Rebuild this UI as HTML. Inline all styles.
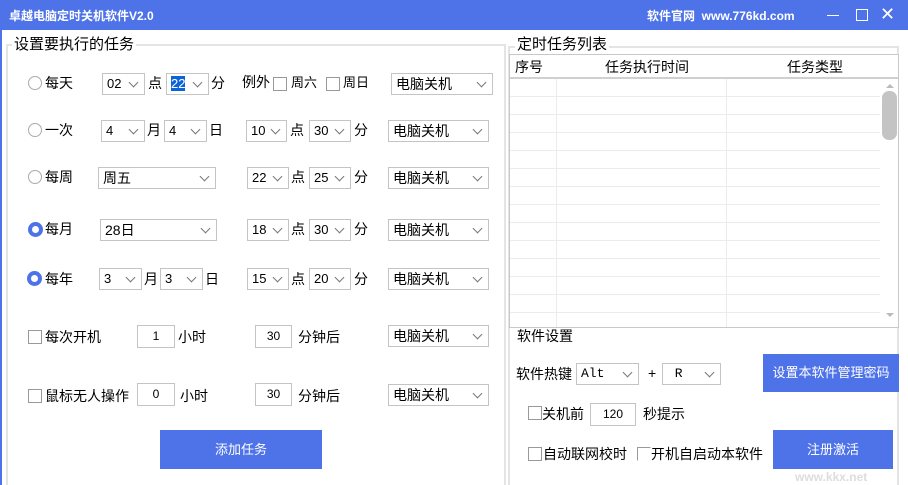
<!DOCTYPE html>
<html style="width:908px;height:485px;overflow:hidden"><head><meta charset="utf-8"><style>
*{margin:0;padding:0;box-sizing:border-box}
body{width:908px;height:485px;overflow:hidden;background:#fff;font-family:"Liberation Sans","Noto Sans CJK SC",sans-serif;font-size:13px;color:#000;position:relative}
.a{position:absolute;white-space:nowrap}
.t{position:absolute;white-space:nowrap;line-height:16px;font-size:14px}
.s{position:absolute;height:22px;border:1px solid #c4c4c4;background:#fff;padding-left:4px;line-height:20px;font-size:13px}
.s:after{content:"";position:absolute;right:7px;top:5px;width:6px;height:6px;border-right:1px solid #777;border-bottom:1px solid #777;transform:rotate(45deg)}
.i{position:absolute;height:23px;border:1px solid #c4c4c4;background:#fff;text-align:center;line-height:21px;font-size:12px}
.r{position:absolute;width:14px;height:14px;border-radius:50%;border:1px solid #aaa;background:#fff}
.rc{position:absolute;width:15px;height:15px;border-radius:50%;background:#4e72e8}
.rc:after{content:"";position:absolute;left:4px;top:4px;width:7px;height:7px;border-radius:50%;background:#fff}
.c{position:absolute;width:14px;height:14px;border:1px solid #999;background:#fff}
.b{position:absolute;background:#4e72e8;color:#fff;text-align:center;font-size:13px}
</style></head><body>
<div class="a" style="left:0;top:0;width:908px;height:30px;background:#4e72e8"></div>
<div class="a" style="left:0;top:30px;width:2px;height:455px;background:#4e72e8"></div>
<div class="a" style="left:9px;top:7px;color:#fff;font-weight:bold;font-size:12px">卓越电脑定时关机软件V2.0</div>
<div class="a" style="left:647px;top:7px;color:#fff;font-weight:bold;font-size:12px">软件官网&nbsp; www.776kd.com</div>
<div class="a" style="left:827px;top:15px;width:12px;height:1px;background:#fff"></div>
<div class="a" style="left:856px;top:9px;width:12px;height:12px;border:1px solid #fff"></div>
<div class="a" style="left:880px;top:4px;color:#fff;font-size:18px">✕</div>

<div class="a" style="left:6px;top:44px;width:500px;height:441px;border:2px solid #e4e4e4;border-bottom:0"></div>
<div class="t" style="left:12px;top:37px;background:#fff;padding:0 2px;font-size:15px">设置要执行的任务</div>

<div class="a" style="left:508px;top:46px;width:391px;height:439px;border:2px solid #e4e4e4;border-bottom:0"></div>
<div class="t" style="left:515px;top:37px;background:#fff;padding:0 2px;font-size:15px">定时任务列表</div>
<div class="a" style="left:509px;top:54px;width:390px;height:274px;border:1px solid #c8c8c8;background:#fff"></div>
<div class="a" style="left:510px;top:77px;width:388px;height:2px;background:#d0d0d0"></div>
<div class="t" style="left:515px;top:59px">序号</div>
<div class="t" style="left:605px;top:59px">任务执行时间</div>
<div class="t" style="left:787px;top:59px">任务类型</div>
<div class="a" style="left:556px;top:79px;width:1px;height:248px;background:#ececec"></div>
<div class="a" style="left:726px;top:79px;width:1px;height:248px;background:#ececec"></div>
<div class="a" style="left:510px;top:79px;width:370px;height:248px;background:repeating-linear-gradient(to bottom,transparent 0,transparent 17px,#ececec 17px,#ececec 18px)"></div>
<div class="a" style="left:882px;top:91px;width:15px;height:49px;border-radius:7px;background:#c4c4c4"></div>
<div class="a" style="left:886px;top:84px;border:4px solid transparent;border-bottom-color:#bbb;border-top:0"></div>
<div class="a" style="left:886px;top:313px;border:4px solid transparent;border-top-color:#bbb;border-bottom:0"></div>

<!-- row1 -->
<div class="r" style="left:28px;top:76px"></div><div class="t" style="left:45px;top:75px">每天</div>
<div class="s" style="left:102px;top:73px;width:43px">02</div><div class="t" style="left:148px;top:75px">点</div>
<div class="s" style="left:166px;top:73px;width:43px"><span style="background:#0a64d8;color:#fff">22</span></div><div class="t" style="left:211px;top:75px">分</div>
<div class="t" style="left:242px;top:74px">例外</div>
<div class="c" style="left:273px;top:77px"></div><div class="t" style="left:291px;top:75px;font-size:13px">周六</div>
<div class="c" style="left:326px;top:77px"></div><div class="t" style="left:343px;top:75px;font-size:13px">周日</div>
<div class="s" style="left:391px;top:73px;width:102px;font-size:14px">电脑关机</div>
<!-- row2 -->
<div class="r" style="left:28px;top:123px"></div><div class="t" style="left:45px;top:122px">一次</div>
<div class="s" style="left:101px;top:120px;width:44px">4</div><div class="t" style="left:147px;top:122px">月</div>
<div class="s" style="left:164px;top:120px;width:43px">4</div><div class="t" style="left:209px;top:122px">日</div>
<div class="s" style="left:246px;top:120px;width:41px">10</div><div class="t" style="left:290px;top:122px">点</div>
<div class="s" style="left:309px;top:120px;width:42px">30</div><div class="t" style="left:354px;top:122px">分</div>
<div class="s" style="left:388px;top:120px;width:101px;font-size:14px">电脑关机</div>
<!-- row3 -->
<div class="r" style="left:28px;top:170px"></div><div class="t" style="left:45px;top:169px">每周</div>
<div class="s" style="left:98px;top:167px;width:118px;font-size:14px">周五</div>
<div class="s" style="left:247px;top:167px;width:42px">22</div><div class="t" style="left:291px;top:169px">点</div>
<div class="s" style="left:309px;top:167px;width:42px">25</div><div class="t" style="left:354px;top:169px">分</div>
<div class="s" style="left:388px;top:167px;width:101px;font-size:14px">电脑关机</div>
<!-- row4 -->
<div class="rc" style="left:28px;top:222px"></div><div class="t" style="left:45px;top:221px">每月</div>
<div class="s" style="left:100px;top:219px;width:117px;font-size:14px">28日</div>
<div class="s" style="left:247px;top:219px;width:42px">18</div><div class="t" style="left:291px;top:221px">点</div>
<div class="s" style="left:309px;top:219px;width:42px">30</div><div class="t" style="left:354px;top:221px">分</div>
<div class="s" style="left:388px;top:219px;width:101px;font-size:14px">电脑关机</div>
<!-- row5 -->
<div class="rc" style="left:27px;top:271px"></div><div class="t" style="left:45px;top:271px">每年</div>
<div class="s" style="left:99px;top:268px;width:43px">3</div><div class="t" style="left:144px;top:271px">月</div>
<div class="s" style="left:160px;top:268px;width:43px">3</div><div class="t" style="left:205px;top:271px">日</div>
<div class="s" style="left:247px;top:268px;width:42px">15</div><div class="t" style="left:291px;top:271px">点</div>
<div class="s" style="left:309px;top:268px;width:42px">20</div><div class="t" style="left:354px;top:271px">分</div>
<div class="s" style="left:388px;top:268px;width:101px;font-size:14px">电脑关机</div>
<!-- row6 -->
<div class="c" style="left:28px;top:330px"></div><div class="t" style="left:45px;top:329px">每次开机</div>
<div class="i" style="left:137px;top:325px;width:38px">1</div><div class="t" style="left:178px;top:329px">小时</div>
<div class="i" style="left:255px;top:325px;width:37px">30</div><div class="t" style="left:298px;top:329px">分钟后</div>
<div class="s" style="left:388px;top:325px;width:101px;font-size:14px">电脑关机</div>
<!-- row7 -->
<div class="c" style="left:28px;top:389px"></div><div class="t" style="left:45px;top:388px">鼠标无人操作</div>
<div class="i" style="left:137px;top:383px;width:38px">0</div><div class="t" style="left:180px;top:388px">小时</div>
<div class="i" style="left:255px;top:383px;width:37px">30</div><div class="t" style="left:298px;top:388px">分钟后</div>
<div class="s" style="left:388px;top:384px;width:101px;font-size:14px">电脑关机</div>

<div class="b" style="left:160px;top:430px;width:162px;height:39px;line-height:39px">添加任务</div>

<!-- right settings -->
<div class="t" style="left:517px;top:328px">软件设置</div>
<div class="t" style="left:516px;top:366px">软件热键</div>
<div class="s" style="left:576px;top:363px;width:63px;font-family:'Liberation Mono',monospace">Alt</div>
<div class="t" style="left:648px;top:365px">+</div>
<div class="s" style="left:662px;top:363px;width:59px;font-family:'Liberation Mono',monospace">&nbsp;R</div>
<div class="b" style="left:763px;top:354px;width:136px;height:38px;line-height:38px">设置本软件管理密码</div>
<div class="c" style="left:528px;top:406px"></div><div class="t" style="left:542px;top:406px">关机前</div>
<div class="i" style="left:590px;top:403px;width:46px">120</div><div class="t" style="left:643px;top:406px">秒提示</div>
<div class="c" style="left:528px;top:447px"></div><div class="t" style="left:543px;top:446px">自动联网校时</div>
<div class="c" style="left:637px;top:447px;border-right-color:#fff;border-bottom-color:#fff"></div><div class="t" style="left:651px;top:446px">开机自启动本软件</div>
<div class="b" style="left:773px;top:430px;width:120px;height:39px;line-height:39px">注册激活</div>
<div class="a" style="left:795px;top:470px;color:#ddd;font-size:12px;font-weight:bold">www.kkx.net</div>
</body></html>
